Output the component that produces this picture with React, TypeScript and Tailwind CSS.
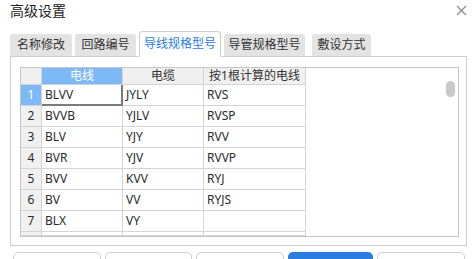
import React from "react";

const tabs = [
  { label: "名称修改", w: "w-[62px]", ml: "ml-0" },
  { label: "回路编号", w: "w-[61px]", ml: "ml-[3px]" },
  { label: "导线规格型号", w: "w-[82px]", ml: "ml-[3px]", active: true },
  { label: "导管规格型号", w: "w-[81px]", ml: "ml-[3px]" },
  { label: "敷设方式", w: "w-[59px]", ml: "ml-[7px]" },
];

const rows = [
  ["BLVV", "JYLY", "RVS"],
  ["BVVB", "YJLV", "RVSP"],
  ["BLV", "YJY", "RVV"],
  ["BVR", "YJV", "RVVP"],
  ["BVV", "KVV", "RYJ"],
  ["BV", "VV", "RYJS"],
  ["BLX", "VY", ""],
  ["", "", ""],
];

const font = { fontFamily: '"Noto Sans", "Noto Sans CJK SC", sans-serif' };

export default function App() {
  return (
    <div className="w-[476px] h-[259px] bg-white overflow-hidden text-[#333]" style={font}>
      {/* title bar */}
      <div className="h-[31px] flex items-start justify-between pl-[10px] pr-[9px]">
        <span className="text-[14px] leading-[22px] text-[#222]">高级设置</span>
        <svg width="11" height="11" viewBox="0 0 11 11" className="mt-[5px]">
          <path d="M1 1 L10 10 M10 1 L1 10" stroke="#888" strokeWidth="1.2" />
        </svg>
      </div>

      {/* tabs */}
      <div className="flex items-end h-[25px] px-[10px] relative z-10">
        {tabs.map((t) =>
          t.active ? (
            <div
              key={t.label}
              className={`${t.w} ${t.ml} h-[26px] -mb-px bg-white border border-[#cdcdcd] border-b-white rounded-t-[4px] flex items-center justify-center text-[12px] text-[#2a7be4]`}
            >
              {t.label}
            </div>
          ) : (
            <div
              key={t.label}
              className={`${t.w} ${t.ml} h-[22px] bg-[#e3e3e3] rounded-t-[3px] flex items-center justify-center text-[12px] text-[#333]`}
            >
              {t.label}
            </div>
          )
        )}
      </div>

      {/* panel */}
      <div className="mx-[10px] w-[457px] h-[190px] border border-[#cdcdcd] pt-[10px] pl-[9px]">
        <div className="relative w-[439px] h-[170px] border border-[#c6c6c6] overflow-hidden flex text-[12px]">
          <div className="flex flex-col">
            {/* header */}
            <div className="flex h-[17px] border-b border-[#d4d4d4] bg-[#f0f0f0] leading-[16px]">
              <div className="w-[21px] border-r border-[#d4d4d4]" />
              <div className="w-[81px] border-r border-[#d4d4d4] bg-[#7db9f6] text-white text-center">电线</div>
              <div className="w-[81px] border-r border-[#d4d4d4] text-center">电缆</div>
              <div className="w-[102px] border-r border-[#d4d4d4] text-center">按1根计算的电线</div>
            </div>
            {rows.map((r, i) => (
              <div key={i} className="flex h-[21px] border-b border-[#d4d4d4] leading-[20px] text-[#2b2b2b]">
                <div
                  className={`w-[21px] border-r border-[#d4d4d4] text-center ${
                    i === 0 ? "bg-[#7db9f6] text-white" : "bg-[#f0f0f0]"
                  }`}
                >
                  {i < 7 ? i + 1 : ""}
                </div>
                <div
                  className={`w-[81px] pl-[3px] ${
                    i === 0
                      ? "border-r-2 border-b-2 border-[#7a7a7a] -mb-px h-[21px] leading-[19px]"
                      : "border-r border-[#d4d4d4]"
                  }`}
                >
                  {r[0]}
                </div>
                <div className="w-[81px] border-r border-[#d4d4d4] pl-[3px]">{r[1]}</div>
                <div className="w-[102px] border-r border-[#d4d4d4] pl-[3px]">{r[2]}</div>
              </div>
            ))}
          </div>
          <div className="absolute left-[425px] top-[13px] w-[9px] h-[16px] rounded-full bg-[#c9c9c9]" />
        </div>
      </div>

      {/* buttons */}
      <div className="flex gap-[4px] px-[13px] pr-[11px] mt-[6px]">
        <button className="flex-1 h-[30px] rounded-[5px] border border-[#cfcfcf] bg-white" />
        <button className="flex-1 h-[30px] rounded-[5px] border border-[#cfcfcf] bg-white" />
        <button className="flex-1 h-[30px] rounded-[5px] border border-[#cfcfcf] bg-white" />
        <button className="flex-1 h-[30px] rounded-[5px] bg-[#2b7de0]" />
        <button className="flex-1 h-[30px] rounded-[5px] border border-[#cfcfcf] bg-white" />
      </div>
    </div>
  );
}
